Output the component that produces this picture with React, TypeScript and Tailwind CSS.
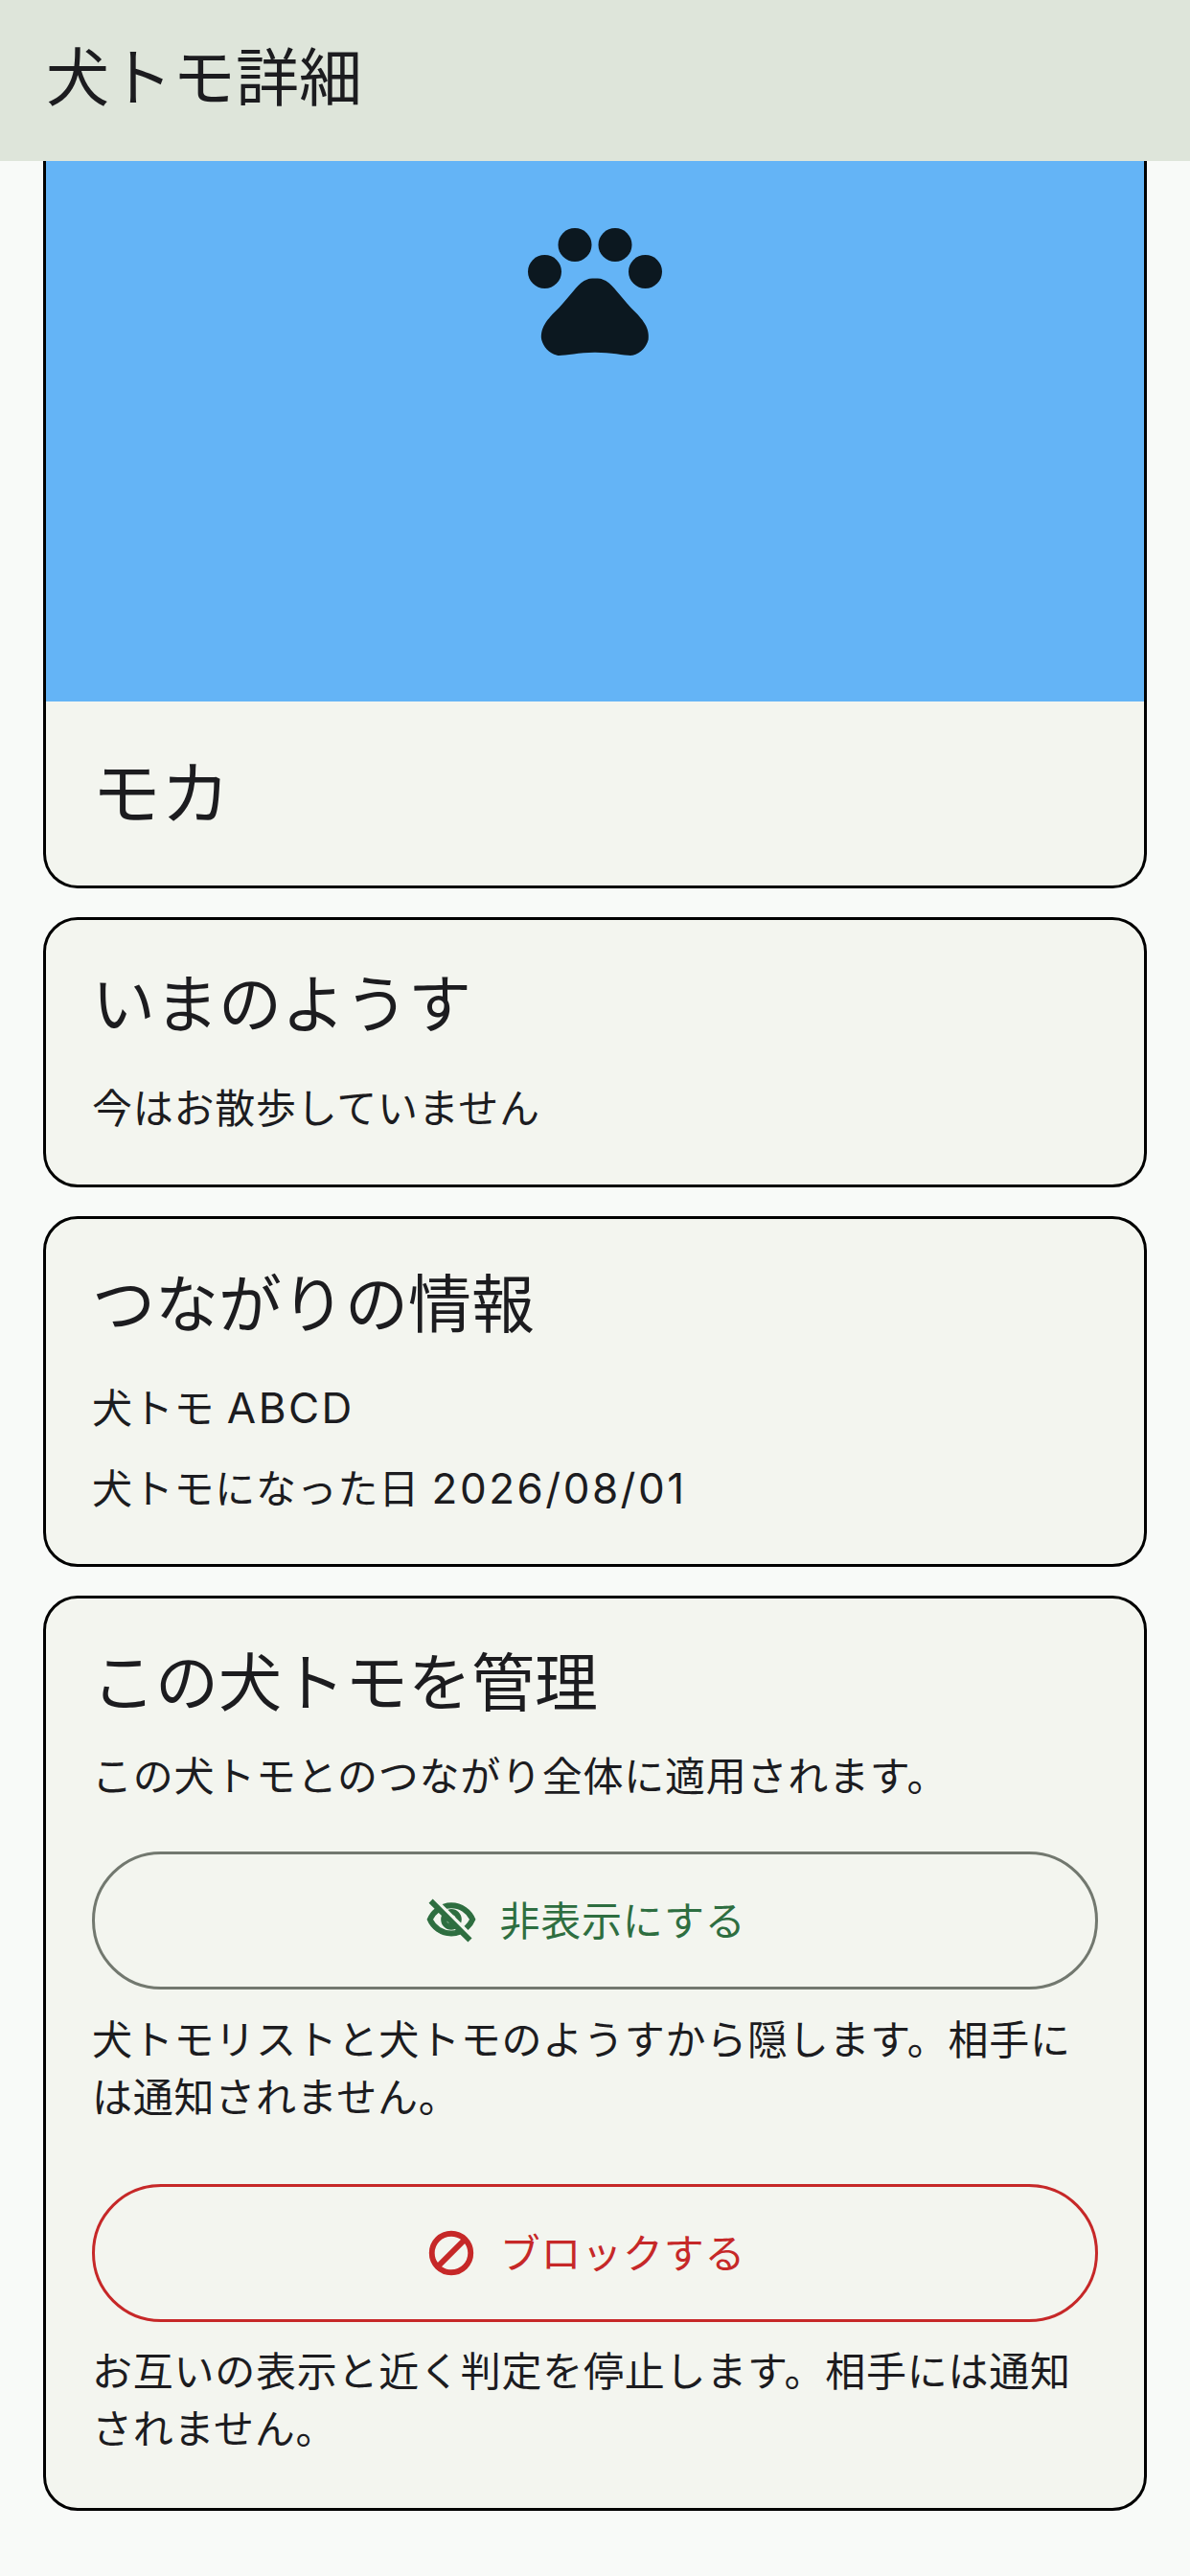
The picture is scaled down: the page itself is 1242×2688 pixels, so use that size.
import { MdPets } from "react-icons/md";

const font = { fontFamily: 'Inter, "Noto Sans CJK JP", "Noto Sans", sans-serif' };

function Card({ children }: { children: React.ReactNode }) {
  return (
    <section className="rounded-[36px] border-[3px] border-black bg-[#f3f5ef] px-[48px]">
      {children}
    </section>
  );
}

function EyeOffIcon() {
  return (
    <svg viewBox="0 0 24 24" className="h-[54px] w-[54px]" fill="currentColor" stroke="currentColor" strokeWidth={0.6}>
      <path d="M12 6c3.79 0 7.17 2.13 8.82 5.5-.59 1.22-1.42 2.27-2.41 3.12l1.41 1.41c1.39-1.23 2.49-2.77 3.18-4.53C21.27 7.11 17 4 12 4c-1.27 0-2.49.2-3.64.57l1.65 1.65C10.66 6.09 11.32 6 12 6zm-1.07 1.14L13 9.21c.57.25 1.03.71 1.28 1.28l2.07 2.07c.08-.34.14-.7.14-1.07C16.5 9.01 14.48 7 12 7c-.37 0-.72.05-1.07.14zM2.01 3.87l2.68 2.68C3.06 7.83 1.77 9.53 1 11.5 2.73 15.89 7 19 12 19c1.52 0 2.98-.29 4.32-.82l3.42 3.42 1.41-1.41L3.42 2.45 2.01 3.87zm7.5 7.5l2.61 2.61c-.04.01-.08.02-.12.02-1.38 0-2.5-1.12-2.5-2.5 0-.05.01-.08.01-.13zm-3.4-3.4l1.75 1.75c-.23.55-.36 1.15-.36 1.78 0 2.48 2.02 4.5 4.5 4.5.63 0 1.23-.13 1.77-.36l.98.98c-.88.24-1.8.38-2.75.38-3.79 0-7.17-2.13-8.82-5.5.7-1.43 1.72-2.61 2.93-3.53z" />
    </svg>
  );
}

function BlockIcon() {
  return (
    <svg viewBox="0 0 24 24" className="h-[54px] w-[54px]" fill="currentColor" stroke="currentColor" strokeWidth={0.6}>
      <path d="M12 2C6.48 2 2 6.48 2 12s4.48 10 10 10 10-4.48 10-10S17.52 2 12 2zM4 12c0-4.42 3.58-8 8-8 1.85 0 3.55.63 4.9 1.69L5.69 16.9C4.63 15.55 4 13.85 4 12zm8 8c-1.85 0-3.55-.63-4.9-1.69L18.31 7.1C19.37 8.45 20 10.15 20 12c0 4.42-3.58 8-8 8z" />
    </svg>
  );
}

export default function App() {
  return (
    <div style={font} className="min-h-[2688px] w-[1242px] bg-[#f8faf8] text-[#1c1c1f]">
      <header className="flex h-[168px] items-center bg-[#dee5da] pb-[6px] pl-[48px]">
        <h1 className="text-[66px] leading-none">犬トモ詳細</h1>
      </header>

      <main className="flex flex-col gap-[30px] px-[45px]">
        <section className="overflow-hidden rounded-b-[36px] border-[3px] border-t-0 border-black bg-[#f3f5ef]">
          <div className="flex h-[564px] justify-center bg-[#64b4f6] pt-[49px] text-[#0c1820]">
            <MdPets size={168} />
          </div>
          <div className="flex h-[192px] items-center px-[48px]">
            <h2 className="text-[72px] leading-none">モカ</h2>
          </div>
        </section>

        <Card>
          <div className="h-[276px] pt-[55px]">
            <h2 className="text-[66px] leading-none">いまのようす</h2>
            <p className="mt-[55px] text-[42px] leading-none tracking-[0.75px]">今はお散歩していません</p>
          </div>
        </Card>

        <Card>
          <div className="h-[360px] pt-[56px]">
            <h2 className="text-[66px] leading-none">つながりの情報</h2>
            <p className="mt-[53px] text-[42px] leading-none tracking-[0.75px]">
              犬トモ <span className="text-[44px] tracking-[2.5px]">ABCD</span>
            </p>
            <p className="mt-[40px] text-[42px] leading-none tracking-[0.75px]">
              犬トモになった日 <span className="text-[44px] tracking-[2.5px]">2026/08/01</span>
            </p>
          </div>
        </Card>

        <Card>
          <div className="pt-[55px] pb-[52px]">
            <h2 className="text-[66px] leading-none">この犬トモを管理</h2>
            <p className="mt-[44px] text-[42px] leading-none tracking-[0.75px]">この犬トモとのつながり全体に適用されます。</p>

            <button className="mt-[57px] flex h-[144px] w-full items-center justify-center gap-[24px] rounded-full border-[3px] border-[#72786f] pr-[20px] text-[42px] tracking-[0.75px] text-[#2e6e40]">
              <EyeOffIcon />
              非表示にする
            </button>
            <p className="mt-[23px] text-[42px] leading-[60px] tracking-[0.75px]">
              犬トモリストと犬トモのようすから隠します。相手には通知されません。
            </p>

            <button className="mt-[60px] flex h-[144px] w-full items-center justify-center gap-[24px] rounded-full border-[3px] border-[#c62828] pr-[20px] text-[42px] tracking-[0.75px] text-[#c62828]">
              <BlockIcon />
              ブロックする
            </button>
            <p className="mt-[22px] text-[42px] leading-[60px] tracking-[0.75px]">
              お互いの表示と近く判定を停止します。相手には通知されません。
            </p>
          </div>
        </Card>
      </main>
    </div>
  );
}
